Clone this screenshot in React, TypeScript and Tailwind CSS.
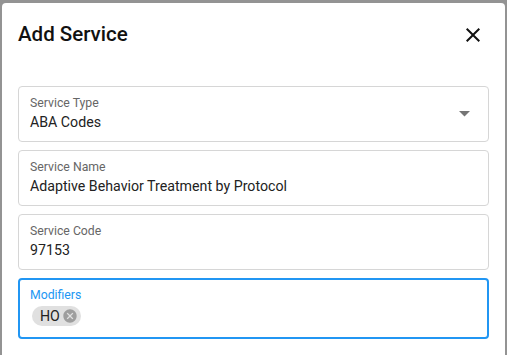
import React from "react";

function Field({ label, value, select }: { label: string; value: string; select?: boolean }) {
  return (
    <div className="relative h-[56px] rounded-[4px] border border-[#d6d6d6] px-[11px] pt-[8px]">
      <div className="text-[12.25px] leading-[16px] text-[#666666]">{label}</div>
      <div className="mt-[1px] text-[14.2px] leading-[20px] text-[#222222]">{value}</div>
      {select && (
        <svg className="absolute right-[17px] top-[24px]" width="12" height="6" viewBox="0 0 12 6">
          <path d="M0 0h11l-5.5 5.5z" fill="#757575" />
        </svg>
      )}
    </div>
  );
}

export default function App() {
  return (
    <div className="flex h-[355px] w-[507px] overflow-hidden bg-[#939393] pl-[2px] pr-[2px] pt-[3px]" style={{ fontFamily: "Roboto, 'Liberation Sans', sans-serif" }}>
      <div className="flex h-[400px] flex-1 flex-col rounded-[4px] bg-white px-[16px]">
        <div className="mt-[15px] flex items-center justify-between">
          <div className="text-[20.5px] font-medium leading-[32px] text-[#111111]">Add Service</div>
          <svg width="24" height="24" viewBox="0 0 24 24" className="mr-[4px] mt-[2px]">
            <path d="M19 6.41 17.59 5 12 10.59 6.41 5 5 6.41 10.59 12 5 17.59 6.41 19 12 13.41 17.59 19 19 17.59 13.41 12z" fill="#111111" />
          </svg>
        </div>
        <div className="mt-[36px] flex flex-col gap-[8px]">
          <Field label="Service Type" value="ABA Codes" select />
          <Field label="Service Name" value="Adaptive Behavior Treatment by Protocol" />
          <Field label="Service Code" value="97153" />
          <div className="h-[61px] rounded-[4px] border-2 border-[#2196f3] px-[10px] pt-[7px]">
            <div className="text-[12.25px] leading-[16px] text-[#2196f3]">Modifiers</div>
            <div className="mt-[3px] flex">
              <div className="ml-[2px] flex h-[20px] items-center rounded-full bg-[#e0e0e0] pl-[8px] pr-[3px]">
                <span className="text-[14.2px] leading-[20px] text-[#222222]">HO</span>
                <svg width="16" height="16" viewBox="0 0 24 24" className="ml-[2px]">
                  <path d="M12 2C6.47 2 2 6.47 2 12s4.47 10 10 10 10-4.47 10-10S17.53 2 12 2zm5 13.59L15.59 17 12 13.41 8.41 17 7 15.59 10.59 12 7 8.41 8.41 7 12 10.59 15.59 7 17 8.41 13.41 12 17 15.59z" fill="#9e9e9e" />
                </svg>
              </div>
            </div>
          </div>
        </div>
      </div>
    </div>
  );
}
